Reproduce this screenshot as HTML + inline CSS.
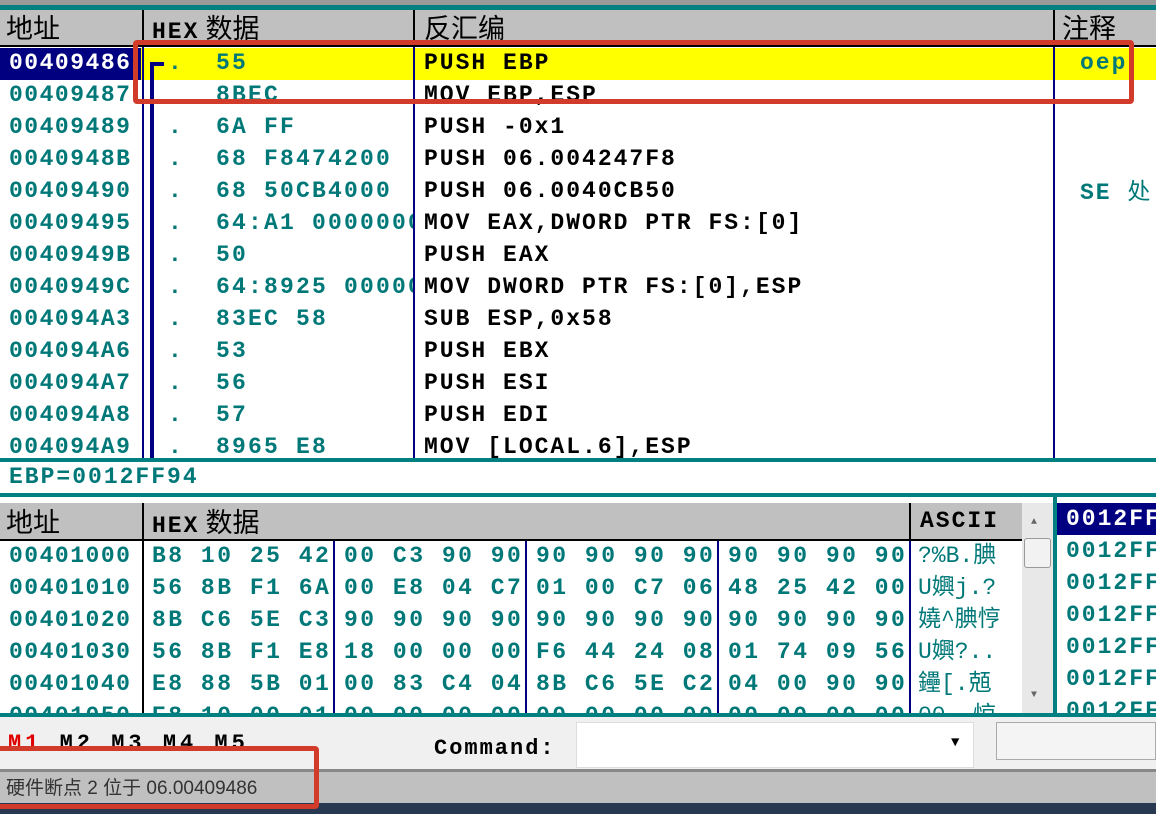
<!DOCTYPE html>
<html><head><meta charset="utf-8"><style>
body{margin:0;width:1156px;height:814px;overflow:hidden;background:#fff;position:relative;font-family:"Liberation Mono","WenQuanYi Zen Hei",monospace;}
div,span{position:absolute;box-sizing:border-box;}
.t{font-weight:bold;font-size:23px;letter-spacing:2px;color:#007878;white-space:pre;line-height:32px;}
.g{letter-spacing:2.5px;}
.k{color:#000;}
.h{background:#c0c0c0;}
.hd{font-size:27px;color:#000;line-height:36px;white-space:pre;font-family:"WenQuanYi Zen Hei","Noto Sans CJK SC",sans-serif;}
.hb{font-family:"Liberation Mono",monospace;font-weight:bold;font-size:23px;letter-spacing:2px;}
.vl{width:2px;background:#000080;}
</style></head><body>
<div style="left:0;top:0;width:1156px;height:5px;background:#9a9a9a"></div>
<div style="left:0;top:5px;width:1156px;height:5px;background:#008080"></div>
<div class="h" style="left:0;top:10px;width:1156px;height:36px"></div>
<div style="left:0;top:45px;width:1156px;height:2px;background:#000"></div>
<div class="hd" style="left:6px;top:9px">地址</div>
<div class="hd" style="left:152px;top:9px"><span class="hb" style="position:static">HEX</span> 数据</div>
<div class="hd" style="left:424px;top:9px">反汇编</div>
<div class="hd" style="left:1062px;top:9px">注释</div>
<div style="left:142px;top:10px;width:2px;height:36px;background:#000"></div>
<div style="left:413px;top:10px;width:2px;height:36px;background:#000"></div>
<div style="left:1053px;top:10px;width:2px;height:36px;background:#000"></div>
<div style="left:0;top:48px;width:1156px;height:32px;background:#ffff00"></div>
<div style="left:0;top:48px;width:141px;height:32px;background:#000080"></div>
<div class="t" style="left:9px;top:47px;color:#fff;letter-spacing:1.5px">00409486</div>
<div class="t" style="left:9px;top:79px;letter-spacing:1.5px">00409487
00409489
0040948B
00409490
00409495
0040949B
0040949C
004094A3
004094A6
004094A7
004094A8
004094A9</div>
<div style="left:168px;top:47px;width:245px;height:413px;overflow:hidden">
<div class="t" style="left:0;top:0;letter-spacing:2.2px">.  55
   8BEC
.  6A FF
.  68 F8474200
.  68 50CB4000
.  64:A1 00000000
.  50
.  64:8925 00000000
.  83EC 58
.  53
.  56
.  57
.  8965 E8</div></div>
<div class="vl" style="left:142px;top:47px;height:413px"></div>
<div class="vl" style="left:413px;top:47px;height:413px"></div>
<div class="vl" style="left:1053px;top:47px;height:413px"></div>
<div style="left:150px;top:62px;width:4px;height:398px;background:#000080"></div>
<div style="left:150px;top:62px;width:14px;height:4px;background:#000080"></div>
<div class="t k" style="left:424px;top:47px">PUSH EBP
MOV EBP,ESP
PUSH -0x1
PUSH 06.004247F8
PUSH 06.0040CB50
MOV EAX,DWORD PTR FS:[0]
PUSH EAX
MOV DWORD PTR FS:[0],ESP
SUB ESP,0x58
PUSH EBX
PUSH ESI
PUSH EDI
MOV [LOCAL.6],ESP</div>
<div class="t" style="left:1080px;top:47px">oep</div>
<div class="t" style="left:1080px;top:175px">SE <span style="position:static;font-weight:normal;font-family:'WenQuanYi Zen Hei',sans-serif">处</span></div>
<div style="left:0;top:458px;width:1156px;height:4px;background:#008080"></div>
<div class="t" style="left:9px;top:461px">EBP=0012FF94</div>
<div style="left:0;top:493px;width:1156px;height:4px;background:#008080"></div>
<div class="h" style="left:0;top:503px;width:1022px;height:36px"></div>
<div style="left:0;top:539px;width:1022px;height:2px;background:#000"></div>
<div class="hd" style="left:6px;top:503px">地址</div>
<div class="hd" style="left:152px;top:503px"><span class="hb" style="position:static">HEX</span> 数据</div>
<div class="hd hb" style="left:920px;top:503px;letter-spacing:2px">ASCII</div>
<div style="left:142px;top:503px;width:2px;height:212px;background:#000"></div>
<div style="left:909px;top:503px;width:2px;height:36px;background:#000"></div>
<div style="left:0;top:540px;width:1022px;height:174px;overflow:hidden">
<div class="t" style="left:9px;top:0;letter-spacing:1.5px">00401000
00401010
00401020
00401030
00401040
00401050</div>
<div class="t g" style="left:152px;top:0">B8 10 25 42
56 8B F1 6A
8B C6 5E C3
56 8B F1 E8
E8 88 5B 01
E8 10 00 01</div>
<div class="t g" style="left:344px;top:0">00 C3 90 90
00 E8 04 C7
90 90 90 90
18 00 00 00
00 83 C4 04
00 00 00 00</div>
<div class="t g" style="left:536px;top:0">90 90 90 90
01 00 C7 06
90 90 90 90
F6 44 24 08
8B C6 5E C2
00 00 00 00</div>
<div class="t g" style="left:728px;top:0">90 90 90 90
48 25 42 00
90 90 90 90
01 74 09 56
04 00 90 90
00 00 00 00</div>
<div class="t" style="left:918px;top:0;font-weight:normal;letter-spacing:0">?%B.腆
U嬹j.?
嬈^腆悙
U嬹?..
鑸[.兡
00..惊</div>
</div>
<div class="vl" style="left:333px;top:541px;height:174px"></div>
<div class="vl" style="left:525px;top:541px;height:174px"></div>
<div class="vl" style="left:717px;top:541px;height:174px"></div>
<div class="vl" style="left:909px;top:541px;height:174px"></div>
<div style="left:1022px;top:503px;width:31px;height:212px;background:#e8e8e8"></div>
<div style="left:1024px;top:538px;width:27px;height:30px;background:#f2f2f2;border:1px solid #999;border-radius:3px"></div>
<div style="left:1031px;top:517px;font-size:10px;color:#666">▲</div>
<div style="left:1031px;top:690px;font-size:10px;color:#666">▼</div>
<div style="left:1053px;top:497px;width:4px;height:218px;background:#008080"></div>
<div style="left:1057px;top:503px;width:99px;height:32px;background:#000080"></div>
<div class="t" style="left:1066px;top:503px;color:#fff">0012FF</div>
<div class="t" style="left:1066px;top:535px">0012FF
0012FF
0012FF
0012FF
0012FF
0012FF</div>
<div style="left:0;top:713px;width:1156px;height:4px;background:#008080"></div>
<div style="left:0;top:717px;width:1156px;height:53px;background:#f0f0f0"></div>
<div class="t k" style="left:8px;top:728px;font-size:22px;letter-spacing:4px"><span style="position:static;color:#e00000">M1</span> M2 M3 M4 M5</div>
<div class="t k" style="left:434px;top:733px;font-size:22px;letter-spacing:2px">Command:</div>
<div style="left:576px;top:722px;width:398px;height:46px;background:#fff;border:1px solid #ddd"></div>
<div style="left:951px;top:735px;font-size:14px">▼</div>
<div style="left:996px;top:722px;width:160px;height:38px;background:#f4f4f4;border:1px solid #aaa"></div>
<div style="left:0;top:769px;width:1156px;height:3px;background:#888"></div>
<div style="left:0;top:772px;width:1156px;height:33px;background:#c0c0c0"></div>
<div style="left:6px;top:774px;font-size:19px;line-height:30px;color:#333;font-family:'WenQuanYi Zen Hei',sans-serif;white-space:pre">硬件断点 2 位于 06.00409486</div>
<div style="left:0;top:803px;width:1156px;height:11px;background:#283850"></div>
<div style="left:133px;top:40px;width:1001px;height:64px;border:5px solid #d23b2a;border-radius:4px"></div>
<div style="left:-5px;top:746px;width:324px;height:63px;border:5px solid #d23b2a;border-radius:4px"></div>
</body></html>
